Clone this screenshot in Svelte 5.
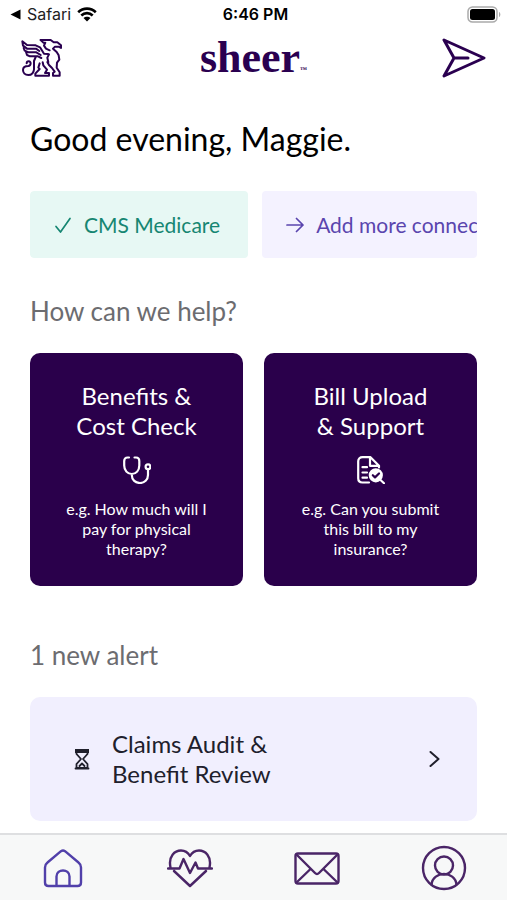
<script lang="ts">
  let name = "Maggie";
  let active = $state("home");

  const cards = [
    {
      id: "benefits",
      title: ["Benefits &", "Cost Check"],
      example: "e.g. How much will I pay for physical therapy?",
    },
    {
      id: "bills",
      title: ["Bill Upload", "& Support"],
      example: "e.g. Can you submit this bill to my insurance?",
    },
  ];

  const tabs = [
    { id: "home", label: "Home" },
    { id: "health", label: "Health" },
    { id: "messages", label: "Messages" },
    { id: "profile", label: "Profile" },
  ];
</script>

<div class="screen">
  <div class="status">
    <a class="back" href="#safari">
      <svg width="11" height="11" viewBox="0 0 11 11" aria-hidden="true"><path d="M10.5 0.5v10L0.5 5.5z" /></svg>
      Safari
      <svg class="wifi" width="20" height="15" viewBox="0 0 20 15" aria-hidden="true">
        <path d="M1.2 5.2C6.2 0.4 13.8 0.4 18.8 5.2M4.3 8.5C7.6 5.3 12.4 5.3 15.7 8.5" />
        <path class="dot" d="M10 14.6L6.5 11.1C8.4 9.3 11.6 9.3 13.5 11.1z" />
      </svg>
    </a>
    <time>6:46 PM</time>
    <svg class="battery" width="34" height="17" viewBox="0 0 34 17" aria-hidden="true">
      <rect class="shell" x="1" y="1" width="29" height="15" rx="4.5" />
      <rect x="3" y="3" width="25" height="11" rx="2.5" />
      <path class="cap" d="M32 6c1.8 0.5 1.8 4.5 0 5z" />
    </svg>
  </div>

  <header>
    <button class="icon" aria-label="About">
      <svg width="42" height="40" viewBox="65 111 126 120" class="griffin" aria-hidden="true">
        <path d="M124 117H154L163 124H174L185 133V141L178 137H167L161 143L172 153L178 163L180 176L173 185L172 200L181 214V224H161V216L166 212L158 201L149 192L144 183" />
        <path d="M124 117L132 125H138L134 134L140 143L151 148" />
        <path d="M146 159L134 158L122 139L109 133L83 132L69 121L71 134L83 143H110L120 150" />
        <path d="M73 141L76 149L88 154H111L124 162M80 153L83 162L92 166H116L126 171" />
        <path d="M109 168L104 180L104 205C103 216 96 222 87 222C77 222 71 215 71 207C71 196 79 195 87 195C95 194 97 181 88 181C84 181 82 184 82 187" />
        <path d="M121 187L117 200L121 204L108 218V224H149V216H137L143 206L132 193L130 184" />
        <path d="M149 160L144 170L147 184" />
      </svg>
    </button>
    <div class="logo">sheer<small>™</small></div>
    <button class="icon" aria-label="Send a message">
      <svg width="44" height="40" viewBox="0 0 44 40" class="send" aria-hidden="true">
        <path d="M2 2L42 20L2 38L12 20zM12 20H26" />
      </svg>
    </button>
  </header>

  <main>
    <h1>Good evening, {name}.</h1>

    <div class="chips">
      <button class="chip done">
        <svg width="18" height="18" viewBox="0 0 18 18" aria-hidden="true"><path d="M2 10.5L6.5 16L16 2.5" /></svg>
        CMS Medicare
      </button>
      <button class="chip add">
        <svg width="18" height="18" viewBox="0 0 18 18" aria-hidden="true"><path d="M1 9H17M10.5 2.5L17 9L10.5 15.5" /></svg>
        Add more connections
      </button>
    </div>

    <h2>How can we help?</h2>
    <div class="cards">
      {#each cards as card (card.id)}
        <button class="card">
          <span class="title">{card.title[0]}<br />{card.title[1]}</span>
          {#if card.id === "benefits"}
            <svg width="28" height="28" viewBox="0 0 28 28" aria-hidden="true">
              <path d="M6 1.5H4.5C2.5 1.5 1.2 3 1.2 5V9.5C1.2 14.5 4.5 18 8.8 18S16.3 14.5 16.3 9.5V5C16.3 3 15 1.5 13 1.5H11.5M8.8 18V19C8.8 24 12.5 27 17 27C21.5 27 25 23.8 25 19V13.5" />
              <circle cx="25" cy="10.8" r="2.4" />
            </svg>
          {:else}
            <svg width="28" height="28" viewBox="0 0 28 28" aria-hidden="true">
              <path d="M12 26.5H5.5C3 26.5 1.2 24.8 1.2 22.3V5.2C1.2 2.8 3 1.2 5.5 1.2H13.5L22 9.7V11.5M13 1.5V9.8H21.5M5.5 11.2H10M5.5 16.5H10M5.5 21.7H10" />
              <circle class="lens" cx="18.8" cy="19.3" r="6" />
              <path d="M23.5 24L27 27.2" />
              <path class="tick" d="M15.8 19.2L18 21.4L22 17.5" />
            </svg>
          {/if}
          <span class="example">{card.example}</span>
        </button>
      {/each}
    </div>

    <h2>1 new alert</h2>
    <button class="alert">
      <svg width="16" height="22" viewBox="0 0 16 22" class="hourglass" aria-hidden="true">
        <path class="cap" d="M1 1H15V5H1zM2 19H14V21H2z" />
        <path d="M1.5 20.5H14.5M2.5 3V6L7 11L2.5 16V20M13.5 3V6L9 11L13.5 16V20M5.5 18L8 15.5L10.5 18" />
      </svg>
      <span>Claims Audit &amp;<br />Benefit Review</span>
      <svg width="11" height="18" viewBox="0 0 11 18" class="chevron" aria-hidden="true"><path d="M1.5 2L9.5 9L1.5 16" /></svg>
    </button>
  </main>

  <nav>
    {#each tabs as tab (tab.id)}
      <button class:active={active === tab.id} aria-label={tab.label} onclick={() => (active = tab.id)}>
        <svg width="46" height="46" viewBox="0 0 46 46" aria-hidden="true">
          {#if tab.id === "home"}
            <path d="M21 6.2Q23 4.8 25 6.2L38.5 17.5Q41 19.5 41 22.5V37.5Q41 41 37.5 41H8.5Q5 41 5 37.5V22.5Q5 19.5 7.5 17.5zM16.5 41V31.5C16.5 23.5 29.5 23.5 29.5 31.5V41" />
          {:else if tab.id === "health"}
            <path d="M3.5 22.5C1 11 8 5.5 14 5.5C18 5.5 21 7.5 23 11C25 7.5 28 5.5 32 5.5C38 5.5 45 11 42.5 22.5M7 26L23 41L39 26M1 23.5H12.5L16.5 14L23 28L28.5 17.5L31 23.5H45" />
          {:else if tab.id === "messages"}
            <rect x="1.5" y="8.5" width="43" height="30" rx="2.5" />
            <path d="M2.5 9.5L21 28Q23 30 25 28L43.5 9.5M2.5 37.5L16.5 24M43.5 37.5L29.5 24" />
          {:else}
            <circle cx="23" cy="23" r="21" />
            <circle cx="23" cy="20.5" r="9" />
            <path d="M10.5 39.5C12 25.5 34 25.5 35.5 39.5" />
          {/if}
        </svg>
      </button>
    {/each}
  </nav>
</div>

<style>
  :global(body) {
    margin: 0;
    background: #fff;
  }
  .screen {
    min-height: 100vh;
    display: flex;
    flex-direction: column;
    font-family: Lato, "Open Sans", sans-serif;
    color: #000;
  }
  svg {
    flex: none;
    fill: none;
    stroke: currentColor;
    stroke-linecap: round;
    stroke-linejoin: round;
  }
  button {
    margin: 0;
    padding: 0;
    border: 0;
    background: none;
    color: inherit;
    font: inherit;
    cursor: pointer;
  }
  .status {
    display: grid;
    grid-template-columns: 1fr auto 1fr;
    align-items: center;
    height: 28px;
    padding: 0 6px 0 10px;
    font-family: Inter, sans-serif;
    font-size: 16px;
    line-height: 28px;
  }
  .back {
    display: flex;
    align-items: center;
    gap: 6px;
    color: #222;
    text-decoration: none;
  }
  .back svg {
    fill: #000;
    stroke: none;
  }
  .back .wifi {
    fill: none;
    stroke: #000;
    stroke-width: 2.6;
    stroke-linecap: butt;
  }
  .back .dot {
    fill: #000;
    stroke: none;
  }
  time {
    font-weight: 600;
  }
  .battery {
    justify-self: end;
    fill: #000;
    stroke: none;
  }
  .battery .shell {
    fill: none;
    stroke: #aaa;
    stroke-width: 1.5;
  }
  .battery .cap {
    fill: #aaa;
  }
  header {
    display: grid;
    grid-template-columns: 1fr auto 1fr;
    align-items: center;
    height: 58px;
    padding: 0 21px;
    color: #2a0050;
  }
  .icon {
    display: flex;
  }
  .icon:last-child {
    justify-self: end;
  }
  .griffin {
    stroke-width: 6;
  }
  .send {
    stroke-width: 3;
  }
  .logo {
    font-family: "Liberation Serif", serif;
    font-size: 44px;
    font-weight: 700;
    line-height: 60px;
  }
  .logo small {
    font-size: 7px;
    line-height: 8px;
  }
  main {
    flex: 1;
    padding: 31px 30px 12px;
  }
  h1,
  h2 {
    margin: 0;
    font-weight: 400;
  }
  h1 {
    font-size: 32px;
    line-height: 44px;
  }
  h2 {
    margin: 36px 0 25px;
    font-size: 26px;
    line-height: 34px;
    color: #6c6c70;
  }
  .chips {
    display: flex;
    gap: 14px;
    margin-top: 30px;
    overflow: hidden;
    border-radius: 4px;
  }
  .chip {
    flex: none;
    display: flex;
    align-items: center;
    gap: 12px;
    height: 67px;
    padding: 0 28px 0 24px;
    border-radius: 4px;
    font-size: 21px;
  }
  .chip svg {
    stroke-width: 1.7;
  }
  .done {
    background: #e7f8f4;
    color: #168672;
  }
  .add {
    background: #f4f2ff;
    color: #5a45ae;
  }
  .cards {
    display: grid;
    grid-template-columns: 1fr 1fr;
    gap: 21px;
    margin-bottom: 52px;
  }
  .card {
    display: flex;
    flex-direction: column;
    align-items: center;
    gap: 15px;
    padding: 28px 32px 27px;
    border-radius: 10px;
    background: #2a004b;
    color: #fff;
  }
  .card svg {
    stroke-width: 2.2;
  }
  .card .lens {
    fill: #fff;
  }
  .card .tick {
    stroke: #2a004b;
  }
  .title {
    font-size: 24px;
    line-height: 30px;
  }
  .example {
    font-size: 16px;
    line-height: 20px;
  }
  .alert {
    display: flex;
    align-items: center;
    gap: 22px;
    width: 100%;
    padding: 32px 37px 32px 44px;
    border-radius: 10px;
    background: #f1effe;
    color: #20202c;
    font-size: 24px;
    line-height: 30px;
    text-align: left;
  }
  .alert span {
    flex: 1;
  }
  .hourglass {
    stroke-width: 1.8;
  }
  .hourglass .cap {
    fill: currentColor;
    stroke: none;
  }
  .chevron {
    stroke-width: 2;
  }
  nav {
    position: sticky;
    bottom: 0;
    display: grid;
    grid-template-columns: repeat(4, 1fr);
    height: 65px;
    border-top: 2px solid #dedfe1;
    background: #f7f8f8;
    color: #4a2567;
  }
  nav button {
    display: flex;
    align-items: center;
    justify-content: center;
  }
  nav svg {
    stroke-width: 2.4;
  }
  nav .active {
    color: #5140aa;
  }
</style>
